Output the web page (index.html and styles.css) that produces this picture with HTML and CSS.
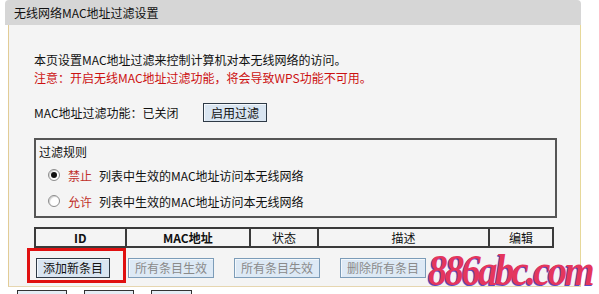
FILE: index.html
```html
<!DOCTYPE html>
<html lang="zh-CN">
<head>
<meta charset="utf-8">
<title>无线网络MAC地址过滤设置</title>
<link rel="stylesheet" href="styles.css">
</head>
<body>
<div class="panel">
  <div class="panel-head">无线网络MAC地址过滤设置</div>
  <div class="panel-body">
    <p class="line">本页设置MAC地址过滤来控制计算机对本无线网络的访问。</p>
    <p class="line note">注意：开启无线MAC地址过滤功能，将会导致WPS功能不可用。</p>
    <div class="status-row">
      <span class="status-label">MAC地址过滤功能：已关闭</span>
      <span class="btn">启用过滤</span>
    </div>
    <div class="rules">
      <div class="rules-title">过滤规则</div>
      <div class="rule"><span class="radio checked"></span><span class="rule-key">禁止</span><span>列表中生效的MAC地址访问本无线网络</span></div>
      <div class="rule"><span class="radio"></span><span class="rule-key">允许</span><span>列表中生效的MAC地址访问本无线网络</span></div>
    </div>
    <table class="list">
      <thead>
        <tr>
          <th class="c-id">ID</th>
          <th class="c-mac">MAC地址</th>
          <th class="c-state">状态</th>
          <th class="c-desc">描述</th>
          <th class="c-edit">编辑</th>
        </tr>
      </thead>
    </table>
    <div class="actions">
      <span class="btn">添加新条目</span>
      <span class="btn disabled">所有条目生效</span>
      <span class="btn disabled">所有条目失效</span>
      <span class="btn disabled">删除所有条目</span>
    </div>
  </div>
</div>
<div class="below">
  <span class="stub w50"></span>
  <span class="stub w50"></span>
  <span class="stub w41"></span>
</div>
<div class="highlight"></div>
<div class="watermark">886abc.com</div>
</body>
</html>
```
FILE: styles.css
```css
html, body {
  margin: 0;
  padding: 0;
  background: #ffffff;
}
body {
  position: relative;
  font-family: "Noto Sans CJK SC", "Liberation Sans", sans-serif;
  font-size: 12px;
  color: #111;
  overflow: hidden;
  height: 294px;
}
.panel {
  margin-left: 5px;
  width: 576px;
}
.panel-head {
  height: 25px;
  line-height: 25px;
  background: #d6d6d6;
  border-radius: 4px 4px 0 0;
  padding-left: 9px;
  font-size: 12px;
  color: #111;
}
.panel-body {
  margin-left: 3px;
  background: #f4f4f4;
  border-left: 1px solid #e2cc96;
  border-right: 1px solid #e6d89a;
  border-bottom: 1px solid #e6d6b0;
  padding: 26px 0 8px 25px;
}
.line {
  margin: 0;
  line-height: 18px;
}
.note {
  color: #cc1111;
}
.status-row {
  margin-top: 15px;
  height: 20px;
  display: flex;
  align-items: center;
}
.status-label {
  width: 169px;
}
.btn {
  display: inline-flex;
  align-items: center;
  justify-content: center;
  height: 17px;
  padding: 0 6px;
  border: 1px solid #2e3a46;
  background: #d9e5f1;
  color: #111;
  font-size: 12px;
  line-height: 17px;
  box-shadow: inset 1px 1px 0 #f4f8fc;
}
.status-row .btn {
  padding: 0 7px;
}
.btn.disabled {
  border-color: #7c9cb8;
  color: #8a8a8a;
  background: #dde9f5;
}
.rules {
  margin-top: 16px;
  width: 516px;
  border: 2px solid #555;
  padding: 2px 0 2px 3px;
}
.rules-title {
  line-height: 20px;
  height: 20px;
}
.rule {
  height: 26px;
  display: flex;
  align-items: center;
  padding-left: 9px;
}
.radio {
  width: 10px;
  height: 10px;
  border: 1px solid #8c8c8c;
  border-radius: 50%;
  background: #fff;
  position: relative;
  margin-right: 8px;
  box-shadow: inset 1px 1px 1px #d0d0d0;
}
.radio.checked::after {
  content: "";
  position: absolute;
  left: 2px;
  top: 2px;
  width: 6px;
  height: 6px;
  border-radius: 50%;
  background: #111;
}
.rule-key {
  color: #c0302a;
  margin-right: 7px;
}
.list {
  margin-top: 9px;
  width: 520px;
  border-collapse: collapse;
  border: 2px solid #3a3a3a;
}
.list th {
  border: 2px solid #3a3a3a;
  height: 17px;
  padding: 0;
  font-weight: normal;
  text-align: center;
  line-height: 17px;
  font-size: 12px;
}
.list .c-id, .list .c-mac { font-weight: bold; }
.c-id { width: 89px; }
.c-mac { width: 123px; }
.c-state { width: 66px; }
.c-desc { width: 170px; }
.c-edit { width: 62px; }
.actions {
  margin-top: 10px;
  margin-left: 2px;
  display: flex;
  gap: 18px;
}
.actions .btn {
  height: 18px;
  line-height: 18px;
}
.actions .btn + .btn + .btn {
  margin-left: 2px;
}
.below {
  margin-top: 3px;
  margin-left: 17px;
  display: flex;
  gap: 17px;
}
.stub {
  height: 20px;
  border: 1px solid #333;
  background: #e4ecf4;
}
.w50 { width: 48px; }
.w41 { width: 39px; }
.highlight {
  position: absolute;
  left: 27px;
  top: 248px;
  width: 93px;
  height: 29px;
  border: 3px solid #e01010;
}
.watermark {
  position: absolute;
  left: 428px;
  top: 251px;
  font-family: "Liberation Serif", "DejaVu Serif", serif;
  font-style: italic;
  font-weight: bold;
  font-size: 44px;
  letter-spacing: -3px;
  line-height: 40px;
  color: #e4365e;
  text-shadow: -1px 1px 0 #5b4cc4;
  transform: scaleX(0.88);
  transform-origin: left top;
}
```
